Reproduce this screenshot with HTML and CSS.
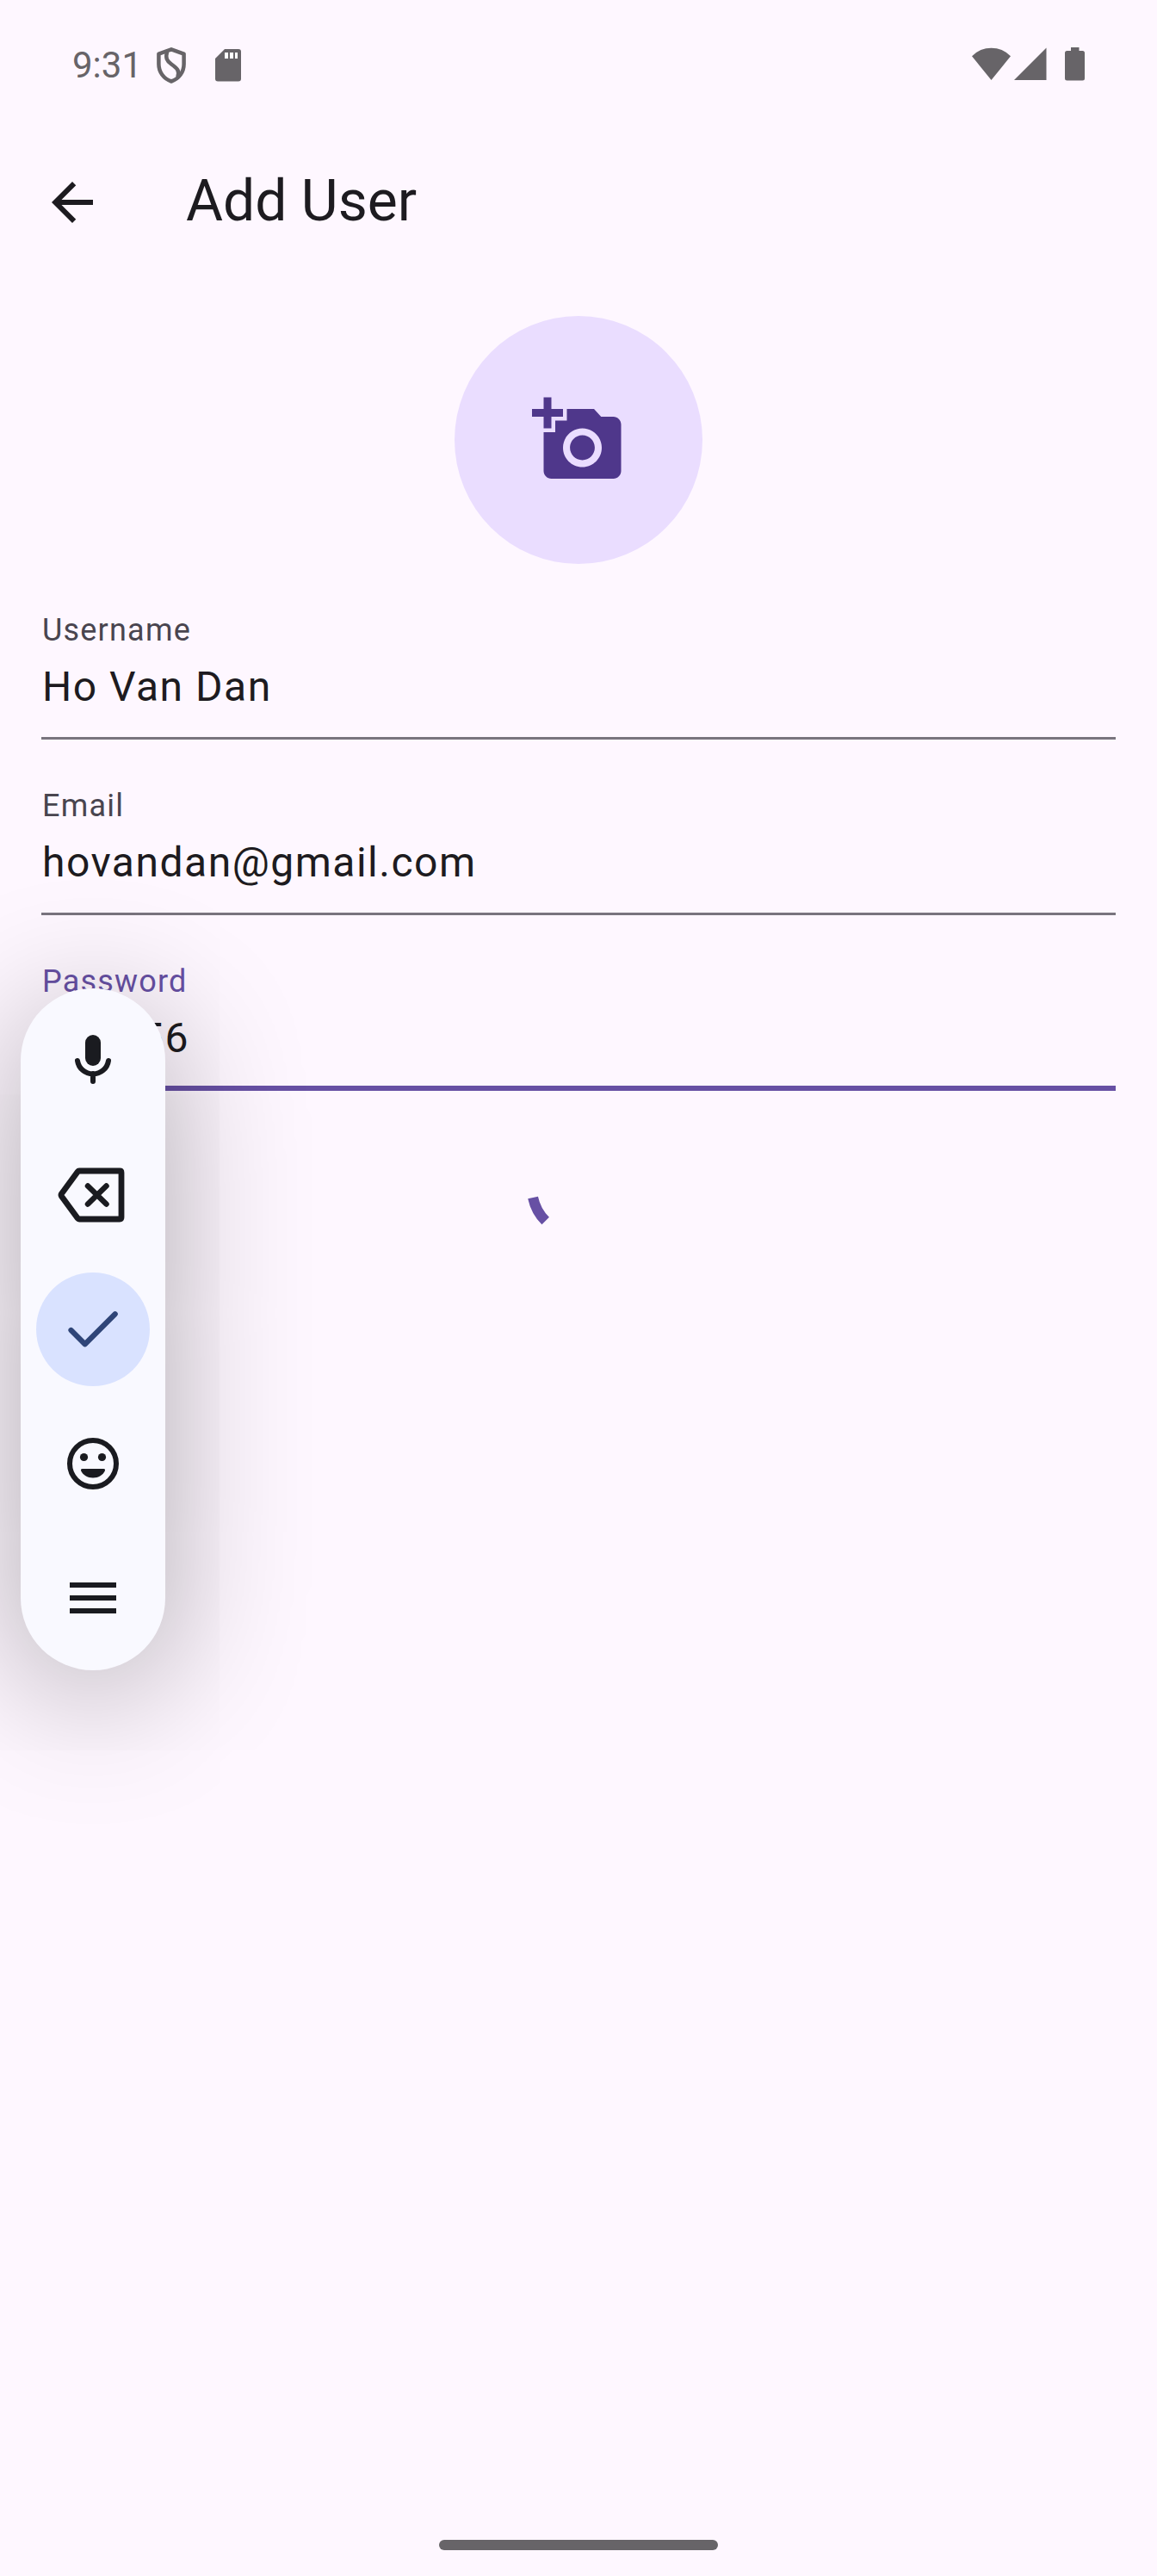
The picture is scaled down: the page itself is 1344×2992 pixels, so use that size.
FILE: index.html
```html
<!DOCTYPE html>
<html lang="en">
<head>
<meta charset="utf-8">
<title>Add User</title>
<link rel="stylesheet" href="styles.css">
</head>
<body>
<div class="screen">
  <header class="status-bar">
    <span class="time">9:31</span>
    <svg class="icon-shield" width="36" height="44" viewBox="0 0 36 44" fill="none" stroke="currentColor" stroke-width="4.500" stroke-linejoin="round"><path d="M18 3.300 3.400 8.600V20.500C3.400 29.500 9 37.500 18 40.500C27 37.500 32.600 29.500 32.600 20.500V8.600Z"/><path d="M13 6.500C11.200 13 12.500 16.500 18 20.500C25 25.500 28 28.500 25.400 35.500"/></svg>
    <svg class="icon-sd" width="30" height="38" viewBox="0 0 30 38"><path fill="currentColor" d="M11 0H27Q30 0 30 3V34.500Q30 37.500 27 37.500H3Q0 37.500 0 34.500V11Z"/><path fill="#fff" d="M11 4h4v7h-4zM17 4h4v7h-4zM23 4h3v7h-3z"/></svg>
    <span class="spacer"></span>
    <svg class="icon-wifi" width="45" height="38" viewBox="0 0 45 38" fill="currentColor"><path d="M0 10.200Q9.500 .8 22.500 .8T45 10.200L22.500 38Z"/></svg>
    <svg class="icon-signal" width="38" height="38" viewBox="0 0 38 38" fill="currentColor"><path d="M0 38 37.500 .5V38Z"/></svg>
    <svg class="icon-battery" width="23" height="39" viewBox="0 0 23 39" fill="currentColor"><path d="M7 0h9.500v4H20.500Q23 4 23 6.500V36Q23 38.500 20.500 38.500H2.500Q0 38.500 0 36V6.500Q0 4 2.500 4H7Z"/></svg>
  </header>

  <div class="app-bar">
    <svg class="back" width="72" height="72" viewBox="0 0 24 24" fill="currentColor"><path d="M20 11H7.830l5.590-5.590L12 4l-8 8 8 8 1.410-1.410L7.830 13H20z"/></svg>
    <h1 class="title">Add User</h1>
  </div>

  <main class="form">
    <div class="avatar">
      <svg width="108" height="108" viewBox="0 0 24 24" fill="currentColor"><path d="M3 4V1h2v3h3v2H5v3H3V6H0V4zm3 6V7h3V4h7l1.830 2H21c1.100 0 2 .9 2 2v12c0 1.100-.9 2-2 2H5c-1.100 0-2-.9-2-2V10zm7 9c2.760 0 5-2.240 5-5s-2.240-5-5-5-5 2.240-5 5 2.240 5 5 5zm-3.200-5c0 1.770 1.430 3.200 3.200 3.200s3.200-1.430 3.200-3.200-1.430-3.200-3.200-3.200-3.200 1.430-3.200 3.200z"/></svg>
    </div>
    <div class="field"><span class="label">Username</span><span class="value">Ho Van Dan</span></div>
    <div class="field"><span class="label">Email</span><span class="value">hovandan@gmail.com</span></div>
    <div class="field focused"><span class="label">Password</span><span class="value">123456</span></div>
    <svg class="spinner" width="120" height="120" viewBox="0 0 120 120" fill="none" stroke="currentColor" stroke-width="12"><path d="M7.100 71A54 54 0 0 0 21.700 98.100"/></svg>
  </main>

  <footer class="nav"><div class="handle"></div></footer>

  <aside class="toolbar">
    <div class="tool"><svg width="132" height="132" viewBox="0 0 132 132"><rect x="57" y="36" width="18" height="36" rx="9" fill="currentColor"/><path d="M48 66a18.200 18.200 0 0 0 36 0M66 81v9" fill="none" stroke="currentColor" stroke-width="6" stroke-linecap="round"/></svg></div>
    <div class="tool"><svg width="132" height="132" viewBox="0 0 132 132" fill="none" stroke="currentColor" stroke-width="6.800" stroke-linecap="round" stroke-linejoin="round"><path d="M50 38H97Q99 38 99 40V92Q99 94 97 94H50Q49 94 48 92.800L29.500 67.500Q28.500 66 29.500 64.500L48 39.200Q49 38 50 38Z"/><path d="M60 55.500 81.500 76.500M81.500 55.500 60 76.500" stroke-width="6.500"/></svg></div>
    <div class="tool primary"><svg width="132" height="132" viewBox="0 0 132 132" fill="none" stroke="currentColor" stroke-width="6.200" stroke-linecap="round" stroke-linejoin="round"><path d="M40.500 67 56.700 83.300 91.700 48.300"/></svg></div>
    <div class="tool"><svg width="132" height="132" viewBox="0 0 132 132" fill="currentColor"><circle cx="66" cy="66" r="27" fill="none" stroke="currentColor" stroke-width="6"/><circle cx="55.500" cy="58.500" r="4.600"/><circle cx="76.500" cy="58.500" r="4.600"/><path d="M53.500 72H78.500Q80.500 72 80 74C77.500 79.500 72.500 82.500 66 82.500S54.500 79.500 52 74Q51.500 72 53.500 72Z"/></svg></div>
    <div class="tool"><svg width="132" height="132" viewBox="0 0 132 132" fill="currentColor"><path d="M39 48h54v6H39zM39 63h54v6H39zM39 78h54v6H39z"/></svg></div>
  </aside>
</div>
</body>
</html>
```
FILE: styles.css
```css
* { box-sizing: border-box; }

body {
  margin: 0;
  background: #fef7ff;
  color: #1d1b20;
  font-family: Roboto, "Liberation Sans", sans-serif;
}

svg { display: block; flex: none; }

.screen {
  position: relative;
  display: flex;
  flex-direction: column;
  height: 2992px;
  overflow: hidden;
}

.status-bar {
  display: flex;
  align-items: flex-start;
  height: 139px;
  padding: 55px 84px 0;
  color: #676468;
}
.time {
  width: 97px;
  font-size: 42px;
  line-height: 42px;
}
.icon-shield { margin-top: -1px; }
.icon-sd { margin: 2px 0 0 33px; }
.spacer { flex: 1; }
.icon-wifi { margin-right: 4px; }
.icon-signal { margin-right: 21px; }

.app-bar {
  display: flex;
  align-items: center;
  height: 192px;
  padding: 0 48px;
  gap: 96px;
}
.title {
  margin: 0;
  padding-bottom: 3px;
  font-size: 66px;
  font-weight: 400;
  line-height: 84px;
}

.form {
  flex: 1;
  display: flex;
  flex-direction: column;
  gap: 36px;
  padding: 36px 48px;
}
.avatar {
  display: flex;
  align-items: center;
  justify-content: center;
  align-self: center;
  width: 288px;
  height: 288px;
  border-radius: 50%;
  background: #eaddff;
  color: #4f378b;
}

.field {
  display: flex;
  flex-direction: column;
  height: 168px;
  padding: 17px 0 0 1px;
  border-bottom: 3px solid #79747e;
}
.label {
  color: #49454f;
  font-size: 36px;
  line-height: 48px;
  letter-spacing: 1.2px;
}
.value {
  margin-top: 6px;
  font-size: 48px;
  line-height: 72px;
  letter-spacing: 1.5px;
}
.focused { border-bottom: 6px solid #6750a4; }
.focused .label { color: #6750a4; }

.spinner {
  align-self: center;
  margin-top: 17px;
  color: #6750a4;
}

.nav {
  display: flex;
  justify-content: center;
  padding-bottom: 30px;
}
.handle {
  width: 324px;
  height: 12px;
  border-radius: 6px;
  background: #676468;
}

/* floating keyboard toolbar, over the form */
.toolbar {
  position: absolute;
  left: 24px;
  top: 1148px;
  display: flex;
  flex-direction: column;
  gap: 24px;
  padding: 18px;
  border-radius: 84px;
  background: #f9f9ff;
  color: #1a1b20;
  box-shadow: 0 26px 164px rgba(0, 0, 0, .33);
}
.tool { border-radius: 50%; }
.primary {
  background: #d9e2ff;
  color: #2f4578;
}
```
